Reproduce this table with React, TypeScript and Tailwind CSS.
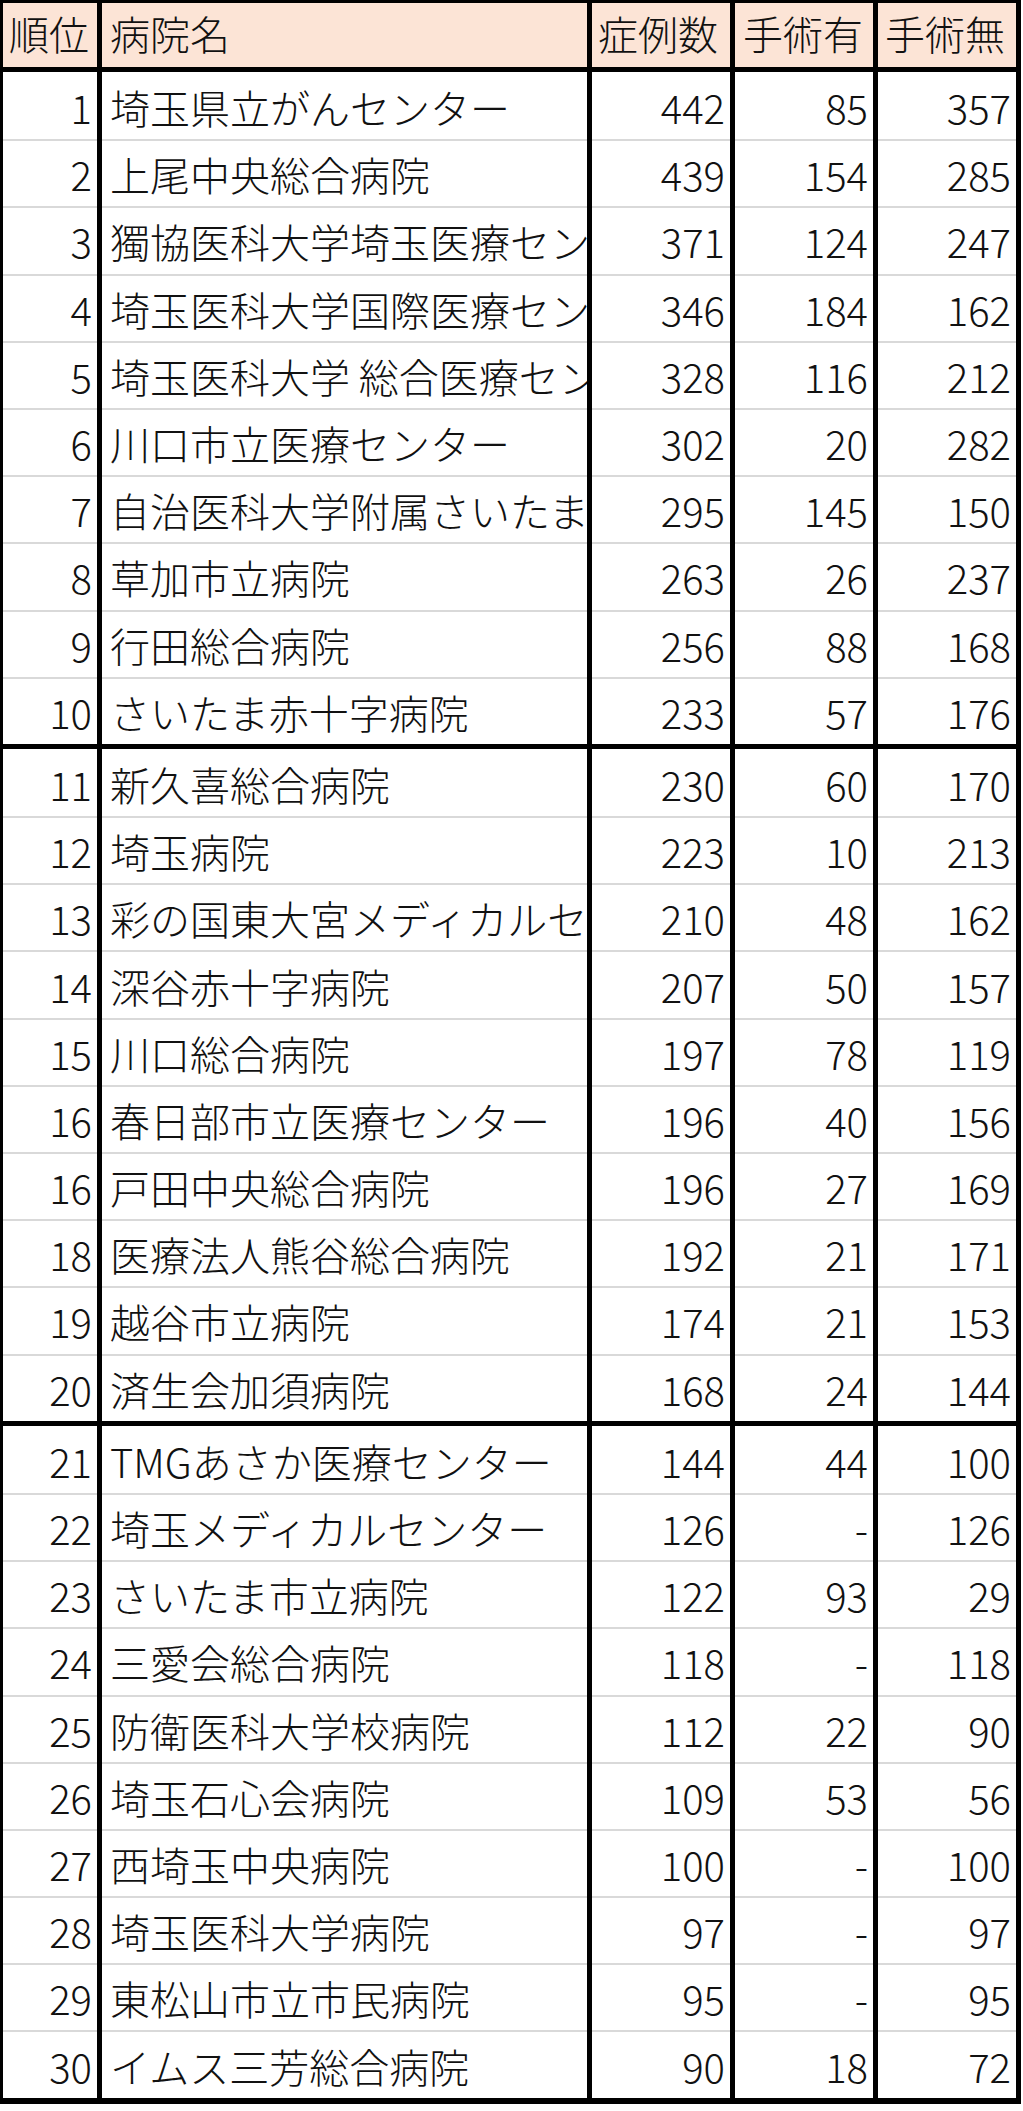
import React from 'react';

type Row = [string, string, string, string, string];

const groups: Row[][] = [
  [
    ['1', '埼玉県立がんセンター', '442', '85', '357'],
    ['2', '上尾中央総合病院', '439', '154', '285'],
    ['3', '獨協医科大学埼玉医療センター', '371', '124', '247'],
    ['4', '埼玉医科大学国際医療センター', '346', '184', '162'],
    ['5', '埼玉医科大学 総合医療センター', '328', '116', '212'],
    ['6', '川口市立医療センター', '302', '20', '282'],
    ['7', '自治医科大学附属さいたま医療センター', '295', '145', '150'],
    ['8', '草加市立病院', '263', '26', '237'],
    ['9', '行田総合病院', '256', '88', '168'],
    ['10', 'さいたま赤十字病院', '233', '57', '176'],
  ],
  [
    ['11', '新久喜総合病院', '230', '60', '170'],
    ['12', '埼玉病院', '223', '10', '213'],
    ['13', '彩の国東大宮メディカルセンター', '210', '48', '162'],
    ['14', '深谷赤十字病院', '207', '50', '157'],
    ['15', '川口総合病院', '197', '78', '119'],
    ['16', '春日部市立医療センター', '196', '40', '156'],
    ['16', '戸田中央総合病院', '196', '27', '169'],
    ['18', '医療法人熊谷総合病院', '192', '21', '171'],
    ['19', '越谷市立病院', '174', '21', '153'],
    ['20', '済生会加須病院', '168', '24', '144'],
  ],
  [
    ['21', 'TMGあさか医療センター', '144', '44', '100'],
    ['22', '埼玉メディカルセンター', '126', '-', '126'],
    ['23', 'さいたま市立病院', '122', '93', '29'],
    ['24', '三愛会総合病院', '118', '-', '118'],
    ['25', '防衛医科大学校病院', '112', '22', '90'],
    ['26', '埼玉石心会病院', '109', '53', '56'],
    ['27', '西埼玉中央病院', '100', '-', '100'],
    ['28', '埼玉医科大学病院', '97', '-', '97'],
    ['29', '東松山市立市民病院', '95', '-', '95'],
    ['30', 'イムス三芳総合病院', '90', '18', '72'],
  ],
];

const line = 'shadow-[inset_0_2px_0_#d9d9d9]';

function DataRow({ row, first }: { row: Row; first: boolean }) {
  const [rank, name, total, withOp, withoutOp] = row;
  const sep = first ? '' : line;
  return (
    <div className="flex h-[67.2px]">
      <div className={`flex w-[94px] items-center justify-end pr-[5px] pt-[3px] ${sep}`}>{rank}</div>
      <div className={`flex w-[490px] items-center overflow-hidden whitespace-nowrap border-l-[5px] border-black pl-[8px] pt-[3px] ${sep}`}>
        {name}
      </div>
      <div className={`flex w-[143px] items-center justify-end border-l-[5px] border-black pr-[5px] pt-[3px] ${sep}`}>{total}</div>
      <div className={`flex w-[143px] items-center justify-end border-l-[5px] border-black pr-[5px] pt-[3px] ${sep}`}>{withOp}</div>
      <div className={`flex w-[143px] items-center justify-end border-l-[5px] border-black pr-[5px] pt-[3px] ${sep}`}>{withoutOp}</div>
    </div>
  );
}

export default function App() {
  return (
    <div className="min-h-screen bg-white">
      <div
        className="w-[1021px] border-l-[3px] border-t-[3px] border-r-[5px] border-b-[6px] border-black text-[40px] font-light leading-none text-[#111]"
        style={{ fontFamily: '"Noto Sans CJK JP", "Noto Sans", sans-serif' }}
      >
        {/* header */}
        <div className="flex h-[69px] border-b-[5px] border-black bg-[#fce4d6]">
          <div className="flex w-[94px] items-center pl-[6px] pb-[4px]">順位</div>
          <div className="flex w-[490px] items-center border-l-[5px] border-black pl-[8px] pb-[4px]">病院名</div>
          <div className="flex w-[143px] items-center border-l-[5px] border-black pl-[6px] pb-[4px]">症例数</div>
          <div className="flex w-[143px] items-center border-l-[5px] border-black pl-[8px] pb-[4px]">手術有</div>
          <div className="flex w-[143px] items-center border-l-[5px] border-black pl-[7px] pb-[4px]">手術無</div>
        </div>

        {groups.map((g, gi) => (
          <div key={gi} className={gi < groups.length - 1 ? 'border-b-[5px] border-black' : ''}>
            {g.map((r, ri) => (
              <DataRow key={ri} row={r} first={ri === 0} />
            ))}
          </div>
        ))}
      </div>
    </div>
  );
}
